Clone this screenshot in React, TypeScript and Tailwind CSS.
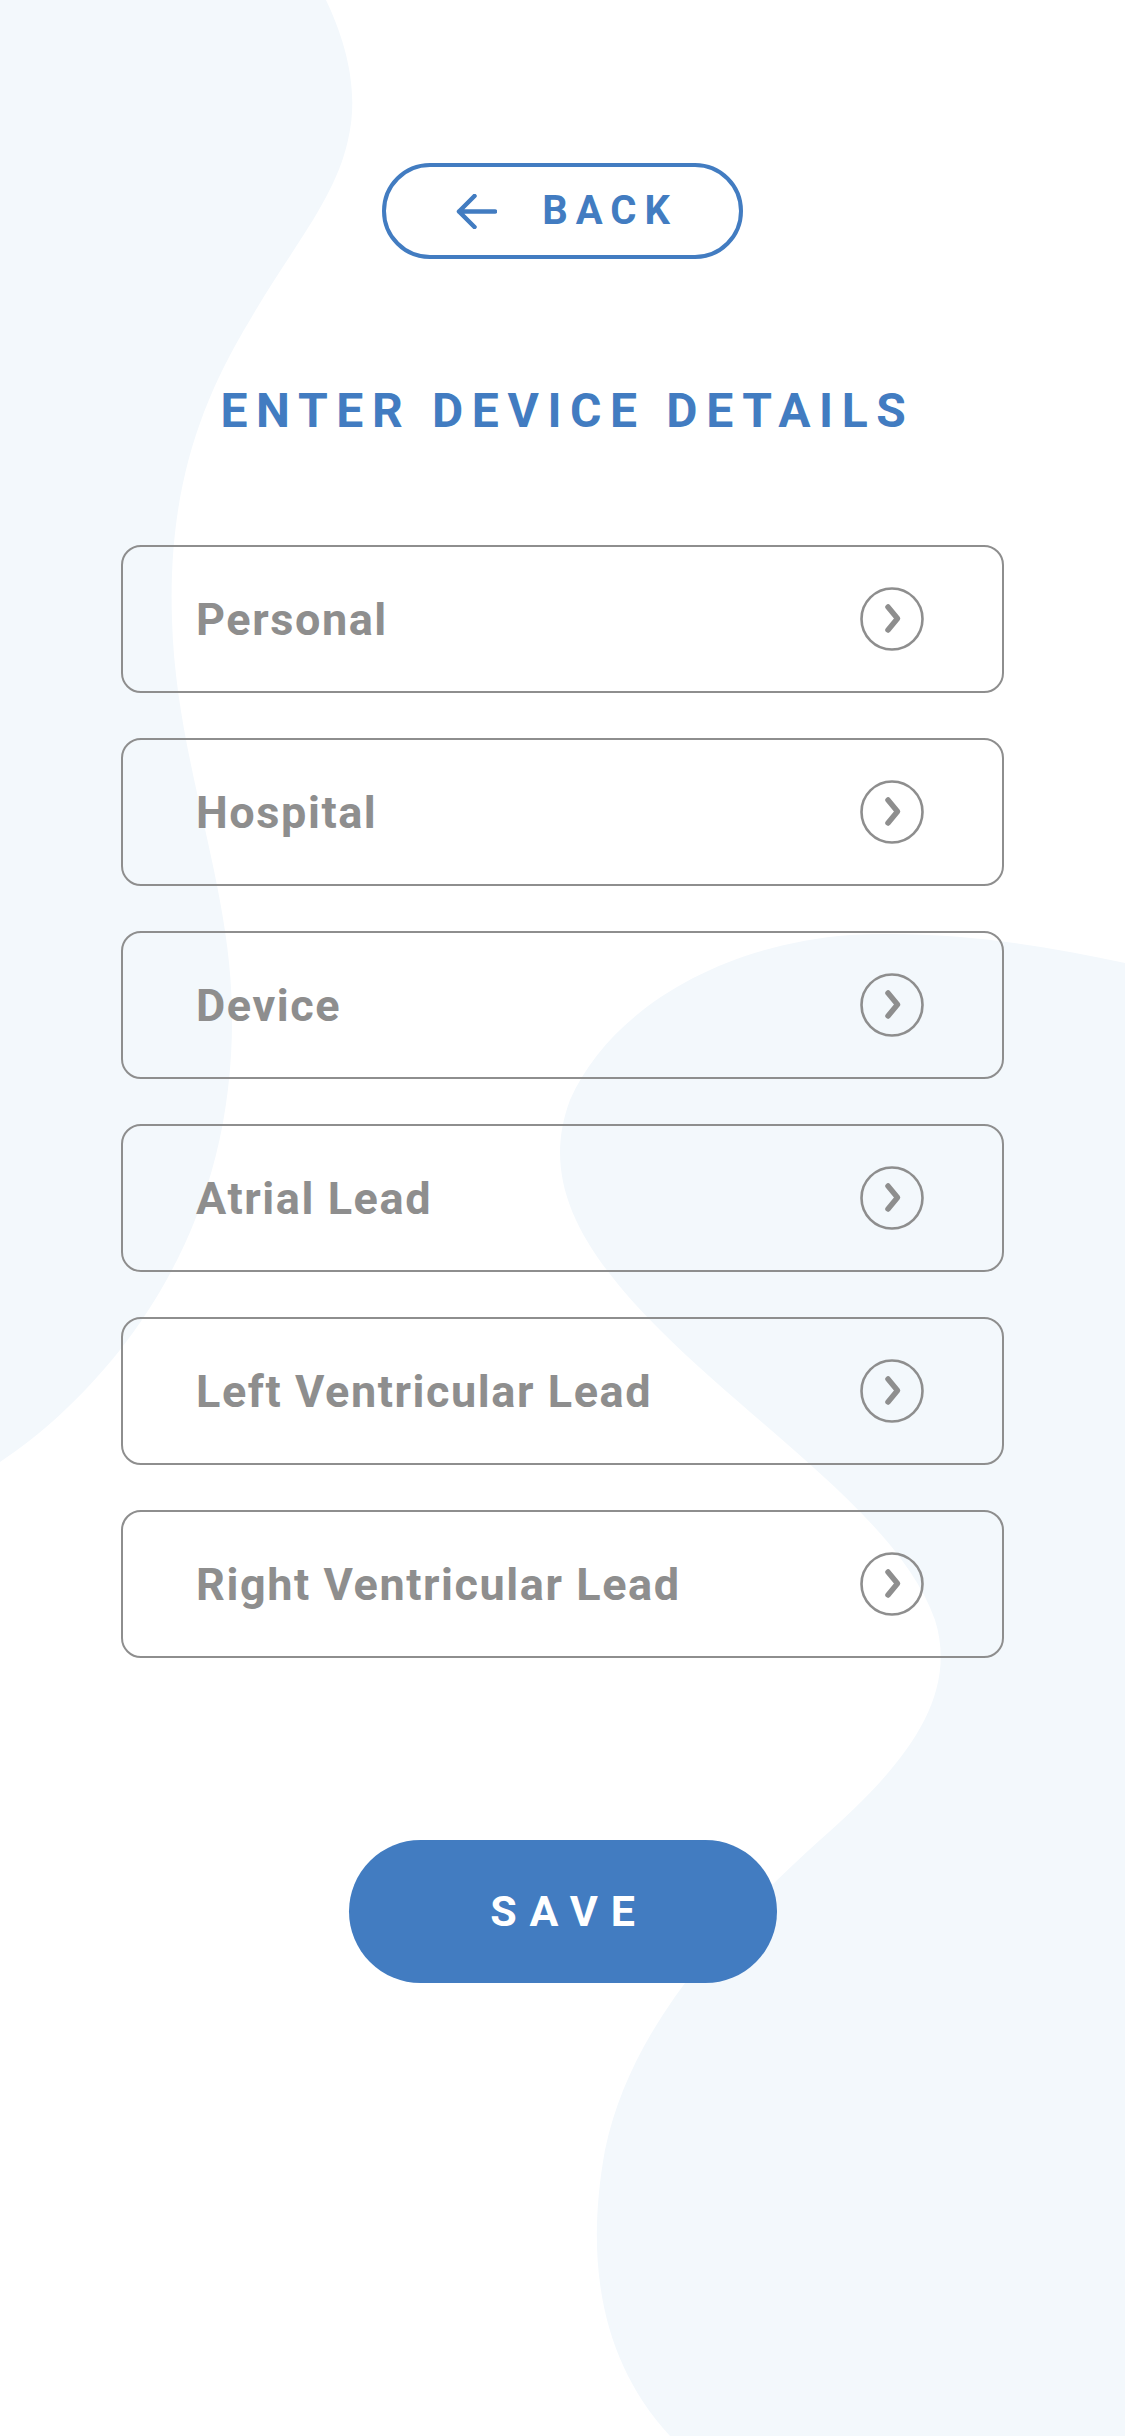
import React from "react";

const sections = [
  "Personal",
  "Hospital",
  "Device",
  "Atrial Lead",
  "Left Ventricular Lead",
  "Right Ventricular Lead",
];

function Blobs() {
  return (
    <svg
      className="absolute inset-0 h-full w-full"
      viewBox="0 0 1125 2436"
      preserveAspectRatio="none"
    >
      <path
        fill="#F3F8FC"
        d="M0 0 L326 0 C345 40 360 90 348 140 C335 200 290 250 250 320 C195 410 168 500 172 620 C176 760 230 880 232 1010 C234 1150 190 1260 120 1350 C80 1400 40 1435 0 1462 Z"
      />
      <path
        fill="#F3F8FC"
        d="M1125 963 C1040 945 950 930 850 935 C720 945 610 1010 570 1100 C540 1180 580 1250 660 1330 C760 1430 900 1520 935 1620 C960 1700 900 1770 820 1840 C720 1930 630 2030 605 2150 C585 2260 600 2360 670 2436 L1125 2436 Z"
      />
    </svg>
  );
}

function ArrowLeft() {
  return (
    <svg width="42" height="35" viewBox="0 0 42 35" fill="none">
      <path
        d="M40 17.5 H4 M19.5 2 L4 17.5 L19.5 33"
        stroke="#427CC1"
        strokeWidth="4.5"
        strokeLinecap="round"
        strokeLinejoin="round"
      />
    </svg>
  );
}

function ChevronCircle() {
  return (
    <svg width="64" height="64" viewBox="0 0 64 64" fill="none">
      <circle cx="32" cy="32" r="30.5" stroke="#8E8E8E" strokeWidth="2.6" />
      <path
        d="M28 20 L37.5 31.5 L28 43"
        stroke="#8E8E8E"
        strokeWidth="5.5"
        strokeLinecap="round"
        strokeLinejoin="round"
      />
    </svg>
  );
}

export default function App() {
  return (
    <div className="relative min-h-[2436px] w-full overflow-hidden bg-white font-['Roboto',sans-serif]">
      <Blobs />
      <div className="relative flex flex-col items-center pt-[163px]">
        <button className="flex h-[96px] w-[361px] items-center justify-center gap-[45px] rounded-full border-4 border-[#427CC1] text-[#427CC1]">
          <ArrowLeft />
          <span className="mr-[-8px] text-[40px] font-bold leading-none tracking-[0.2em]">
            BACK
          </span>
        </button>

        <h1 className="mt-[128px] pl-[10px] text-[48px] font-bold leading-[48px] tracking-[0.18em] text-[#427CC1]">
          ENTER DEVICE DETAILS
        </h1>

        <div className="mt-[110px] flex flex-col gap-[45px]">
          {sections.map((s) => (
            <div
              key={s}
              className="flex h-[148px] w-[883px] items-center justify-between rounded-[20px] border-[2.5px] border-[#8E8E8E] pl-[73px] pr-[78px]"
            >
              <span className="text-[45px] font-bold leading-none tracking-[0.035em] text-[#8E8E8E]">
                {s}
              </span>
              <ChevronCircle />
            </div>
          ))}
        </div>

        <button className="mt-[182px] flex h-[143px] w-[428px] items-center justify-center rounded-full bg-[#427CC1]">
          <span className="mr-[-13px] text-[43px] font-bold leading-none tracking-[0.3em] text-white">
            SAVE
          </span>
        </button>
      </div>
    </div>
  );
}
